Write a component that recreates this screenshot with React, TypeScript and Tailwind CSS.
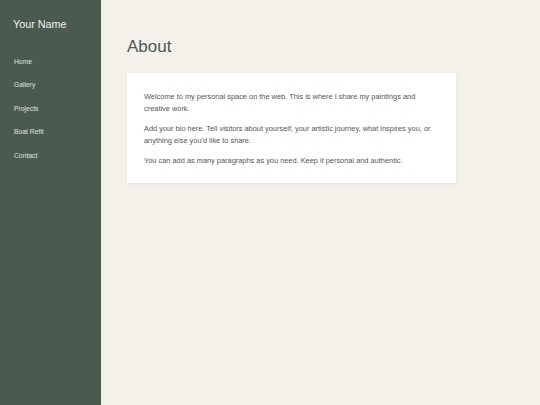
export default function App() {
  const links = ['Home', 'Gallery', 'Projects', 'Boat Refit', 'Contact']
  return (
    <div className="flex h-[405px] w-[540px] font-['Liberation_Sans',Arial,sans-serif] bg-[#f4f1eb]">
      {/* Sidebar */}
      <aside className="w-[101px] shrink-0 bg-[#4a5a4f] px-[13px] pt-[17px]">
        <h1 className="text-[10.8px] leading-[14px] text-[#f4f1eb]">Your Name</h1>
        <nav className="mt-[26px] flex flex-col gap-[13.4px]">
          {links.map((l) => (
            <a key={l} className="pl-px text-[6.75px] leading-[10px] text-[#dfe3df]">
              {l}
            </a>
          ))}
        </nav>
      </aside>

      {/* Main */}
      <main className="flex-1 pl-[26px] pt-[36px]">
        <h2 className="text-[17px] leading-[22px] text-[#4a5a4f]">About</h2>
        <div className="mt-[15px] w-[329px] bg-white px-[17px] pt-[18px] pb-[16px] shadow-[0_1px_3px_rgba(0,0,0,0.06)]">
          <div className="flex flex-col gap-[8px] text-[7.4px] leading-[12px] text-[#555]">
            <p>Welcome to my personal space on the web. This is where I share my paintings and creative work.</p>
            <p>Add your bio here. Tell visitors about yourself, your artistic journey, what inspires you, or anything else you'd like to share.</p>
            <p>You can add as many paragraphs as you need. Keep it personal and authentic.</p>
          </div>
        </div>
      </main>
    </div>
  )
}
